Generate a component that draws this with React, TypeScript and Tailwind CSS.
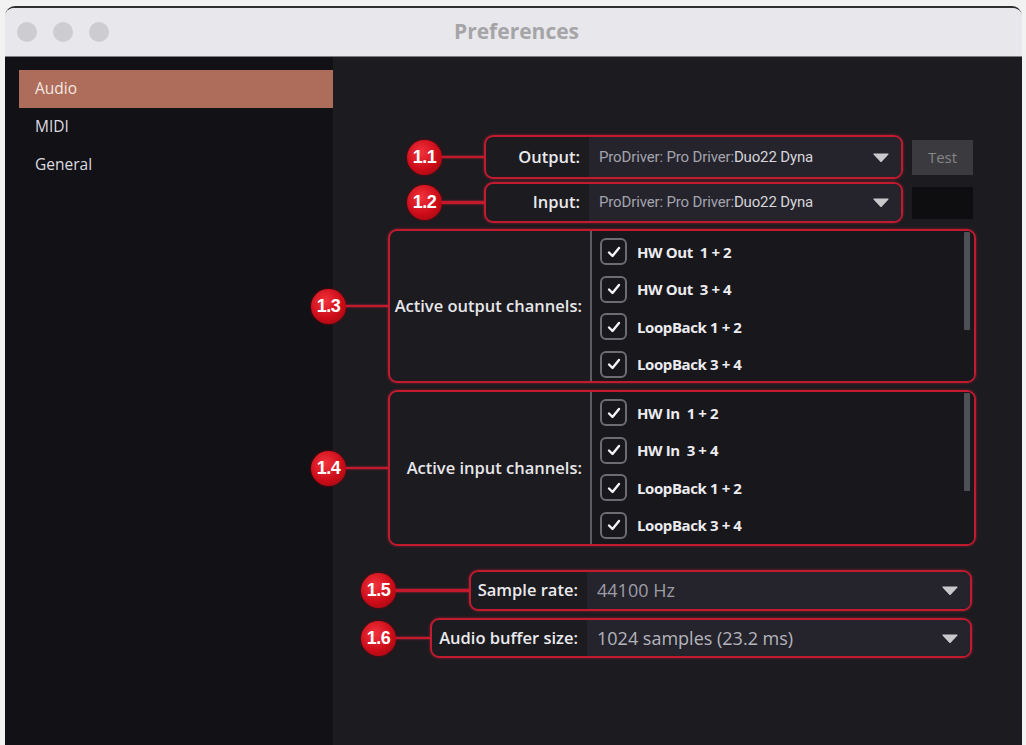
import React from 'react'

const RED = 'bg-[#c4182c]'

function Badge({ n }: { n: string }) {
  return (
    <div className="w-[35px] h-[35px] shrink-0 rounded-full bg-[radial-gradient(circle_at_40%_35%,#f2333d,#cc0c18_55%,#940712)] shadow-[0_0_3px_#7a0008] flex items-center justify-center text-white font-bold text-[18px] tracking-[-0.5px] font-['Liberation_Sans',sans-serif]">
      {n}
    </div>
  )
}

function Line() {
  return <div className={`flex-1 h-[2.5px] ${RED} shadow-[0_0_2px_#e02a3c]`} />
}

function Arrow() {
  return (
    <svg width="16" height="9" viewBox="0 0 16 9" className="shrink-0">
      <path d="M1 1 L15 1 L8 8.5 Z" fill="#c8c8cd" stroke="#c8c8cd" strokeWidth="1.2" strokeLinejoin="round" />
    </svg>
  )
}

function CheckRow({ label }: { label: string }) {
  return (
    <div className="h-[37.5px] flex items-center gap-[10px] pl-[8px]">
      <div className="w-[27px] h-[27px] rounded-[6px] border-2 border-[#6c6c72] flex items-center justify-center">
        <svg width="14" height="12" viewBox="0 0 14 12">
          <path d="M2 6.5 L5.5 10 L12 2" fill="none" stroke="#f4f4f6" strokeWidth="2.4" strokeLinecap="round" strokeLinejoin="round" />
        </svg>
      </div>
      <span className="text-[15px] font-bold text-[#ececf0] tracking-[-0.4px] whitespace-pre">{label}</span>
    </div>
  )
}

function SelectBox({ label, width, labelWidth = '', children }: { label: string; width: string; labelWidth?: string; children: React.ReactNode }) {
  return (
    <div className="h-full flex items-stretch border-[2.5px] border-[#c21a2e] rounded-[9px] shadow-[0_0_3px_rgba(225,40,60,0.55)] overflow-hidden">
      <div className={`${labelWidth} flex items-center justify-end pl-[7px] pr-[9px] text-[16.5px] font-semibold text-[#eaeaee] whitespace-nowrap`}>
        {label}
      </div>
      <div className={`${width} flex items-center justify-between pl-[10px] pr-[12px] bg-[#25242c]`}>
        {children}
        <Arrow />
      </div>
    </div>
  )
}

function ChannelBox({ label, items }: { label: string; items: string[] }) {
  return (
    <div className="w-[588px] h-full flex border-[2.5px] border-[#c21a2e] rounded-[9px] shadow-[0_0_3px_rgba(225,40,60,0.55)] overflow-hidden">
      <div className="flex-1 flex items-center justify-end pr-[8px] text-[16.5px] font-semibold text-[#e6e6ea] whitespace-nowrap">
        {label}
      </div>
      <div className="w-[384px] flex border-l-2 border-[#5c5c62] bg-[#18171c]">
        <div className="flex-1 pt-[2px]">
          {items.map((item) => (
            <CheckRow key={item} label={item} />
          ))}
        </div>
        <div className="w-[6px] mr-[4px] pt-[1px]">
          <div className="h-[98px] bg-[#4e5056] rounded-[1px]" />
        </div>
      </div>
    </div>
  )
}

function DriverName() {
  return (
    <span className="text-[15px] tracking-[-0.15px] font-['Roboto',sans-serif]">
      <span className="text-[#a3a3ac]">ProDriver: Pro Driver:</span>
      <span className="text-[#d6d6da]">Duo22 Dyna</span>
    </span>
  )
}

export default function App() {
  return (
    <div className="w-[1026px] h-[745px] bg-[#f2f2f2] pt-[6px] pl-[5px] overflow-hidden font-['Open_Sans',sans-serif]">
      <div className="w-[1017px] h-[739px] flex flex-col rounded-t-[10px] border-t-2 border-[#303032] overflow-hidden">
        {/* Title bar */}
        <div className="h-[49px] shrink-0 bg-[#e8e7eb] border-b border-[#7d7d82] grid grid-cols-[1fr_auto_1fr] items-center">
          <div className="flex items-center gap-[16px] pl-[12px]">
            <div className="w-[20px] h-[20px] rounded-full bg-[#cdccd0]" />
            <div className="w-[20px] h-[20px] rounded-full bg-[#cdccd0]" />
            <div className="w-[20px] h-[20px] rounded-full bg-[#cdccd0]" />
          </div>
          <div className="text-[21px] font-bold text-[#a5a5a8] pl-[6px]">Preferences</div>
          <div />
        </div>

        <div className="flex-1 flex">
          {/* Sidebar */}
          <div className="w-[328px] shrink-0 bg-[#121116] pl-[14px] pt-[13px]">
            <div className="h-[38px] bg-[#ae6d5b] flex items-center pl-[16px] text-[15.5px] text-[#f4e6e0]">Audio</div>
            <div className="h-[38px] flex items-center pl-[16px] text-[15.5px] text-[#dcdce0]">MIDI</div>
            <div className="h-[38px] flex items-center pl-[16px] text-[15.5px] text-[#dcdce0]">General</div>
          </div>

          {/* Content */}
          <div className="flex-1 bg-[#1c1b20] pt-[78px]">
            {/* 1.1 Output */}
            <div className="flex items-center ml-[74px] h-[44px]">
              <div className="w-[496px] h-full flex items-center">
                <Badge n="1.1" />
                <Line />
                <SelectBox label="Output:" width="w-[312px]" labelWidth="w-[103px]">
                  <DriverName />
                </SelectBox>
              </div>
              <div className="ml-[9px] w-[61px] h-[35px] bg-[#3b3b3f] flex items-center justify-center text-[15px] text-[#85858a]">
                Test
              </div>
            </div>

            {/* 1.2 Input */}
            <div className="flex items-center ml-[74px] mt-[3px] h-[41px]">
              <div className="w-[496px] h-full flex items-center">
                <Badge n="1.2" />
                <Line />
                <SelectBox label="Input:" width="w-[312px]" labelWidth="w-[103px]">
                  <DriverName />
                </SelectBox>
              </div>
              <div className="ml-[9px] w-[61px] h-[32px] bg-[#0e0d10]" />
            </div>

            {/* 1.3 Active output channels */}
            <div className="flex items-center -ml-[22px] mt-[6px] w-[665px] h-[154px]">
              <Badge n="1.3" />
              <Line />
              <ChannelBox
                label="Active output channels:"
                items={['HW Out  1 + 2', 'HW Out  3 + 4', 'LoopBack 1 + 2', 'LoopBack 3 + 4']}
              />
            </div>

            {/* 1.4 Active input channels */}
            <div className="flex items-center -ml-[22px] mt-[7px] w-[665px] h-[156px]">
              <Badge n="1.4" />
              <Line />
              <ChannelBox
                label="Active input channels:"
                items={['HW In  1 + 2', 'HW In  3 + 4', 'LoopBack 1 + 2', 'LoopBack 3 + 4']}
              />
            </div>

            {/* 1.5 Sample rate */}
            <div className="flex items-center ml-[28px] mt-[24px] w-[611px] h-[41px]">
              <Badge n="1.5" />
              <Line />
              <SelectBox label="Sample rate:" width="w-[383px]">
                <span className="text-[18px] text-[#9d9da6]">44100 Hz</span>
              </SelectBox>
            </div>

            {/* 1.6 Audio buffer size */}
            <div className="flex items-center ml-[28px] mt-[7px] w-[611px] h-[40px]">
              <Badge n="1.6" />
              <Line />
              <SelectBox label="Audio buffer size:" width="w-[383px]">
                <span className="text-[18px] text-[#b4b4bc]">1024 samples (23.2 ms)</span>
              </SelectBox>
            </div>
          </div>
        </div>
      </div>
    </div>
  )
}
